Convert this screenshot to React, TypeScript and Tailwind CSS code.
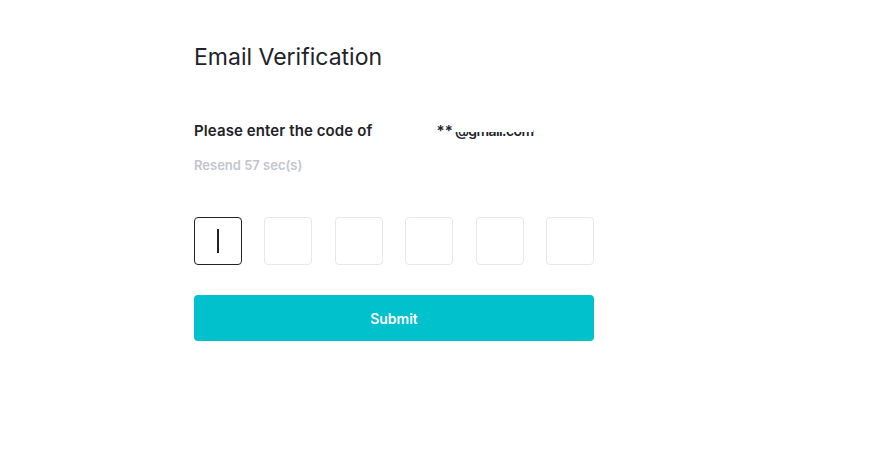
import React from "react";

export default function App() {
  return (
    <div className="w-[881px] h-[465px] bg-white" style={{ fontFamily: "Inter, Roboto, 'Noto Sans', sans-serif" }}>
      <div className="ml-[194px] w-[400px] pt-[42px]">
        <h1 className="text-[23px] leading-[30px] font-normal text-[#1e2329]">Email Verification</h1>
        <div className="mt-[49px] flex items-center text-[15px] leading-[20px] font-semibold text-[#1e2329] tracking-[0.1px]">
          <span>Please enter the code of&nbsp;</span>
          <span className="text-transparent">l*****tt</span>
          <span className="ml-[5px]">**</span>
          <span className="relative ml-[2px] text-[14px] tracking-[-0.6px]">
            <span>@gmail.com</span>
            <span className="absolute left-0 top-0 w-full h-[11px] bg-white" />
          </span>
        </div>
        <div className="mt-[15px] text-[13px] leading-[18px] font-semibold text-[#c1c6cd]">Resend 57 sec(s)</div>
        <div className="mt-[43px] flex justify-between">
          <div className="w-[48px] h-[48px] rounded-[4px] border border-[#1e2329] flex items-center justify-center">
            <div className="w-[2px] h-[24px] bg-[#1e2329]" />
          </div>
          {[0, 1, 2, 3, 4].map((i) => (
            <div key={i} className="w-[48px] h-[48px] rounded-[4px] border border-[#e6e8ea]" />
          ))}
        </div>
        <button className="mt-[30px] w-full h-[46px] rounded-[4px] bg-[#00c1cc] text-white text-[14px] font-semibold">
          Submit
        </button>
      </div>
    </div>
  );
}
